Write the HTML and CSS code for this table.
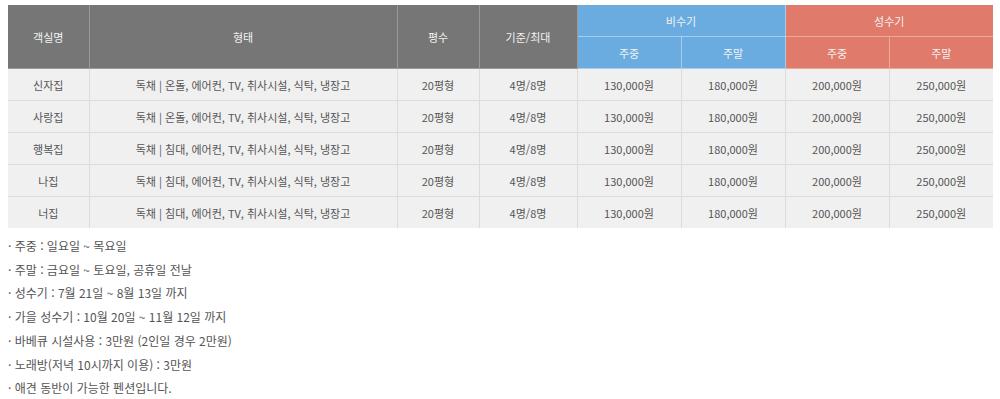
FILE: index.html
```html
<!DOCTYPE html>
<html lang="ko">
<head>
    <meta charset="UTF-8">
    <title>객실요금</title>
    <link rel="stylesheet" href="styles.css">
</head>
<body>
    <table class="price-table">
        <colgroup>
            <col class="c-name">
            <col class="c-type">
            <col class="c-size">
            <col class="c-people">
            <col class="c-price">
            <col class="c-price">
            <col class="c-price">
            <col class="c-price">
        </colgroup>
        <thead>
            <tr>
                <th rowspan="2">객실명</th>
                <th rowspan="2">형태</th>
                <th rowspan="2">평수</th>
                <th rowspan="2">기준/최대</th>
                <th colspan="2" class="off">비수기</th>
                <th colspan="2" class="peak">성수기</th>
            </tr>
            <tr>
                <th class="off">주중</th>
                <th class="off">주말</th>
                <th class="peak">주중</th>
                <th class="peak">주말</th>
            </tr>
        </thead>
        <tbody>
            <tr>
                <td>신자집</td>
                <td>독채 | 온돌, 에어컨, TV, 취사시설, 식탁, 냉장고</td>
                <td>20평형</td>
                <td>4명/8명</td>
                <td>130,000원</td>
                <td>180,000원</td>
                <td>200,000원</td>
                <td>250,000원</td>
            </tr>
            <tr>
                <td>사랑집</td>
                <td>독채 | 온돌, 에어컨, TV, 취사시설, 식탁, 냉장고</td>
                <td>20평형</td>
                <td>4명/8명</td>
                <td>130,000원</td>
                <td>180,000원</td>
                <td>200,000원</td>
                <td>250,000원</td>
            </tr>
            <tr>
                <td>행복집</td>
                <td>독채 | 침대, 에어컨, TV, 취사시설, 식탁, 냉장고</td>
                <td>20평형</td>
                <td>4명/8명</td>
                <td>130,000원</td>
                <td>180,000원</td>
                <td>200,000원</td>
                <td>250,000원</td>
            </tr>
            <tr>
                <td>나집</td>
                <td>독채 | 침대, 에어컨, TV, 취사시설, 식탁, 냉장고</td>
                <td>20평형</td>
                <td>4명/8명</td>
                <td>130,000원</td>
                <td>180,000원</td>
                <td>200,000원</td>
                <td>250,000원</td>
            </tr>
            <tr>
                <td>너집</td>
                <td>독채 | 침대, 에어컨, TV, 취사시설, 식탁, 냉장고</td>
                <td>20평형</td>
                <td>4명/8명</td>
                <td>130,000원</td>
                <td>180,000원</td>
                <td>200,000원</td>
                <td>250,000원</td>
            </tr>
        </tbody>
    </table>

    <ul class="notes">
        <li>· 주중 : 일요일 ~ 목요일</li>
        <li>· 주말 : 금요일 ~ 토요일, 공휴일 전날</li>
        <li>· 성수기 : 7월 21일 ~ 8월 13일 까지</li>
        <li>· 가을 성수기 : 10월 20일 ~ 11월 12일 까지</li>
        <li>· 바베큐 시설사용 : 3만원 (2인일 경우 2만원)</li>
        <li>· 노래방(저녁 10시까지 이용) : 3만원</li>
        <li>· 애견 동반이 가능한 펜션입니다.</li>
    </ul>
</body>
</html>
```

FILE: styles.css
```css
body {
    margin: 5px 7px 0 8px;
    font-family: "Noto Sans CJK KR", "Noto Sans", sans-serif;
    color: #555;
    background: #fff;
}

.price-table {
    width: 985px;
    border-collapse: collapse;
    table-layout: fixed;
    font-size: 11px;
}

.c-name { width: 81px; }
.c-type { width: 308px; }
.c-size { width: 82px; }
.c-people { width: 98px; }
.c-price { width: 104px; }

.price-table th {
    height: 31px;
    padding: 0;
    background: #767676;
    color: #f2f2f2;
    font-weight: normal;
    border: 1px solid #9a9a9a;
    text-align: center;
}

.price-table thead tr:first-child th {
    border-top: none;
}

.price-table th.off {
    background: #6aace0;
    border-color: #a9cdee;
}

.price-table th.peak {
    background: #e07b6b;
    border-color: #eda9a0;
}

.price-table td {
    height: 31px;
    padding: 0;
    background: #f0f0f0;
    border: 1px solid #dcdcdc;
    text-align: center;
    color: #555;
}

.price-table tr > :first-child { border-left: none; }
.price-table tr > :last-child { border-right: none; }
.price-table tbody tr:last-child td { border-bottom: none; }

.notes {
    list-style: none;
    margin: 6px 0 0;
    padding: 0;
    font-size: 12px;
    line-height: 23.7px;
    color: #555;
}
```
